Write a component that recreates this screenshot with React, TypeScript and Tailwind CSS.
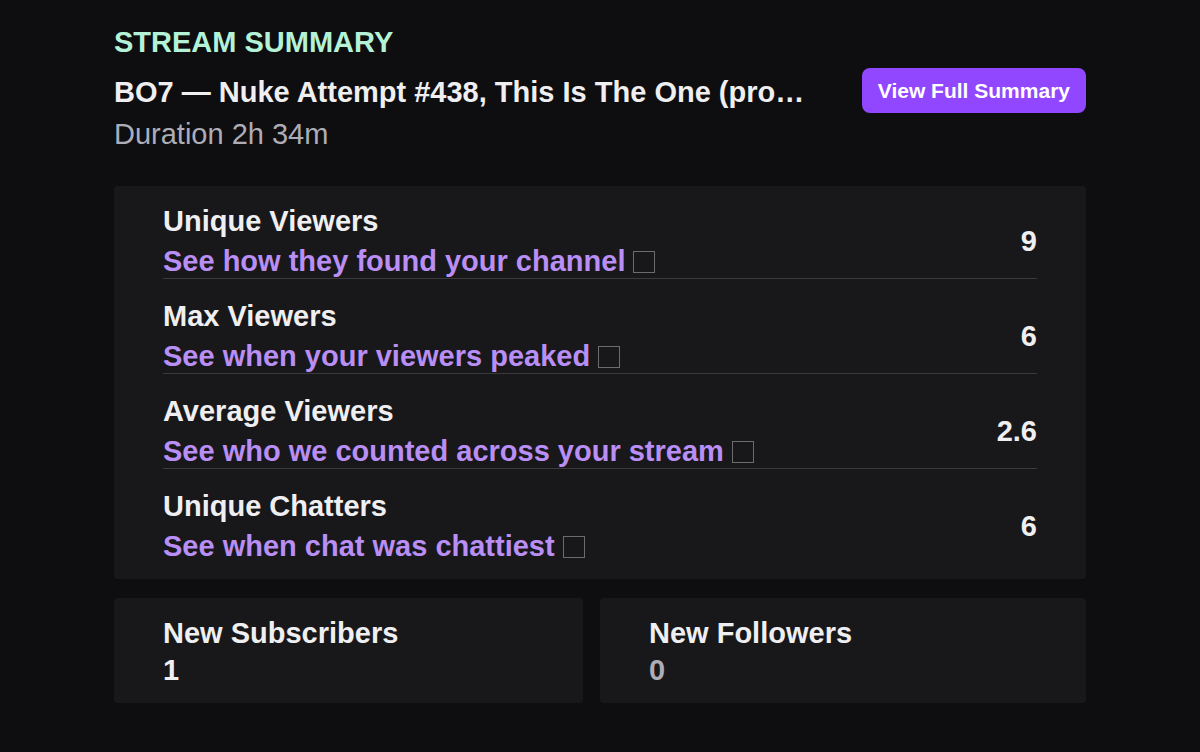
const rows = [
  { label: "Unique Viewers", link: "See how they found your channel", value: "9" },
  { label: "Max Viewers", link: "See when your viewers peaked", value: "6" },
  { label: "Average Viewers", link: "See who we counted across your stream", value: "2.6" },
  { label: "Unique Chatters", link: "See when chat was chattiest", value: "6" },
];

const App = () => {
  return (
    <div className="min-h-screen w-full bg-[#0e0e10] font-['Liberation_Sans',Arial,sans-serif] text-[#efeff1]">
      <div className="mx-auto w-[972px] pt-[25px]">
        <div className="text-[29px] leading-[34px] font-bold text-[#b4f2d8]">
          STREAM SUMMARY
        </div>

        <div className="mt-[16px] flex items-start justify-between gap-[53px]">
          <div className="min-w-0">
            <h1 className="truncate text-[29px] leading-[34px] font-bold">
              BO7 — Nuke Attempt #438, This Is The One (probably, trust me)
            </h1>
            <p className="mt-[8px] text-[29px] leading-[34px] text-[#adadb8]">
              Duration 2h 34m
            </p>
          </div>
          <button
            type="button"
            className="mt-[-7px] h-[45px] shrink-0 rounded-lg bg-[#9147ff] px-4 text-[21px] font-bold text-white"
          >
            View Full Summary
          </button>
        </div>

        {/* Stats */}
        <div className="mt-[35px] rounded bg-[#18181b] px-[49px] pt-[18px] pb-[16px]">
          {rows.map((row, i) => (
            <div
              key={row.label}
              className={
                i < rows.length - 1
                  ? "mb-[20px] flex items-center justify-between border-b border-[#3a3a3d]"
                  : "flex items-center justify-between"
              }
            >
              <div>
                <div className="text-[29px] leading-[34px] font-bold">{row.label}</div>
                <div className="mt-[6px] flex items-center text-[29px] leading-[34px] font-bold text-[#b98ef5]">
                  {row.link}
                  <span className="ml-[8px] mt-[2px] inline-block h-[22px] w-[22px] border border-[#6b6b70]" />
                </div>
              </div>
              <div className="text-[29px] leading-[34px] font-bold">{row.value}</div>
            </div>
          ))}
        </div>

        <div className="mt-[19px] grid grid-cols-[469px_1fr] gap-[17px]">
          <div className="h-[105px] rounded bg-[#18181b] px-[49px] pt-[18px]">
            <div className="text-[29px] leading-[34px] font-bold">New Subscribers</div>
            <div className="mt-[3px] text-[29px] leading-[34px] font-bold">1</div>
          </div>
          <div className="h-[105px] rounded bg-[#18181b] px-[49px] pt-[18px]">
            <div className="text-[29px] leading-[34px] font-bold">New Followers</div>
            <div className="mt-[3px] text-[29px] leading-[34px] font-bold text-[#adadb8]">0</div>
          </div>
        </div>
      </div>
    </div>
  );
};

export default App;
